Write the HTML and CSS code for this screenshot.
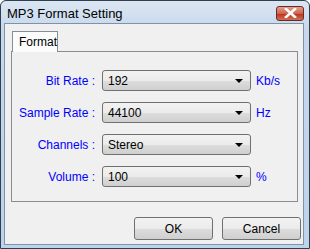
FILE: index.html
```html
<!DOCTYPE html>
<html lang="en">
<head>
    <meta charset="UTF-8">
    <title>MP3 Format Setting</title>
    <link rel="stylesheet" href="styles.css">
</head>
<body>
    <div class="window">
        <div class="titlebar">
            <span class="title">MP3 Format Setting</span>
            <button class="close" aria-label="Close">
                <svg width="13" height="10" viewBox="0 0 13 10">
                    <path d="M2 1 L11 9 M11 1 L2 9" stroke="#fff" stroke-width="2.6" stroke-linecap="square"/>
                </svg>
            </button>
        </div>

        <div class="client">
            <div class="tabs">
                <div class="tab active">Format</div>
            </div>
            <div class="pane">
                <div class="row">
                    <label class="label">Bit Rate :</label>
                    <div class="combo"><span>192</span><i class="arrow"></i></div>
                    <span class="unit">Kb/s</span>
                </div>
                <div class="row">
                    <label class="label">Sample Rate :</label>
                    <div class="combo"><span>44100</span><i class="arrow"></i></div>
                    <span class="unit">Hz</span>
                </div>
                <div class="row">
                    <label class="label">Channels :</label>
                    <div class="combo"><span>Stereo</span><i class="arrow"></i></div>
                    <span class="unit"></span>
                </div>
                <div class="row">
                    <label class="label">Volume :</label>
                    <div class="combo"><span>100</span><i class="arrow"></i></div>
                    <span class="unit">%</span>
                </div>
            </div>

            <div class="buttons">
                <button class="btn">OK</button>
                <button class="btn">Cancel</button>
            </div>
        </div>
    </div>
</body>
</html>
```

FILE: styles.css
```css
* {
    margin: 0;
    padding: 0;
    box-sizing: border-box;
}

body {
    width: 310px;
    height: 249px;
    overflow: hidden;
    font-family: 'Liberation Sans', Arial, sans-serif;
    font-size: 12px;
    background: #fff;
}

.window {
    width: 310px;
    height: 249px;
    border: 1px solid #30404f;
    background: linear-gradient(#dbe6f2, #c6d8ec 30px, #bcd3ec);
    display: flex;
    flex-direction: column;
    padding: 0 5px 3px 3px;
    border-radius: 6px 6px 0 0;
}

/* caption with the red close box */
.titlebar {
    height: 22px;
    display: flex;
    align-items: center;
    justify-content: space-between;
    padding: 0 0 0 3px;
}

.title {
    font-family: 'Liberation Sans', Arial, sans-serif;
    font-size: 13px;
    color: #000;
    padding-top: 2px;
}

.close {
    width: 28px;
    height: 15px;
    border: 1px solid #6b2a22;
    border-radius: 3px;
    background: linear-gradient(#e6a08f, #d0614a 50%, #b9301a 51%, #d1705a);
    display: flex;
    align-items: center;
    justify-content: center;
    margin-top: 2px;
}

.client {
    flex: 1;
    background: #f0f0f0;
    border: 1px solid #7f93a8;
    padding: 7px 5px 0 6px;
    display: flex;
    flex-direction: column;
}

.tabs {
    display: flex;
    height: 20px;
    padding-left: 1px;
}

.tab {
    width: 46px;
    height: 21px;
    border: 1px solid #898c95;
    border-bottom: none;
    background: #fcfcfc;
    padding: 3px 0 0 6px;
    color: #000;
    position: relative;
    z-index: 1;
}

.pane {
    height: 151px;
    border: 1px solid #898c95;
    background: #f0f0f0;
    padding: 18px 0 0 0;
    display: flex;
    flex-direction: column;
    gap: 11px;
}

.row {
    display: flex;
    align-items: center;
    height: 21px;
}

.label {
    width: 84px;
    text-align: right;
    color: #0000ff;
    padding-right: 1px;
}

.combo {
    width: 149px;
    height: 21px;
    margin-left: 6px;
    border: 1px solid #707070;
    border-radius: 3px;
    background: linear-gradient(#f2f2f2, #ebebeb 50%, #dddddd 51%, #cfcfcf);
    display: flex;
    align-items: center;
    justify-content: space-between;
    padding: 1px 7px 0 5px;
    color: #000;
}

.arrow {
    width: 0;
    height: 0;
    border-left: 4px solid transparent;
    border-right: 4px solid transparent;
    border-top: 4px solid #000;
}

.unit {
    margin-left: 5px;
    color: #0000ff;
}

.buttons {
    display: flex;
    justify-content: flex-end;
    gap: 9px;
    padding: 15px 0 0 0;
    margin-right: -3px;
}

.btn {
    width: 79px;
    height: 23px;
    border: 1px solid #707070;
    border-radius: 3px;
    background: linear-gradient(#f2f2f2, #ebebeb 50%, #dddddd 51%, #cfcfcf);
    font-family: 'Liberation Sans', Arial, sans-serif;
    font-size: 12px;
    color: #000;
}
```
